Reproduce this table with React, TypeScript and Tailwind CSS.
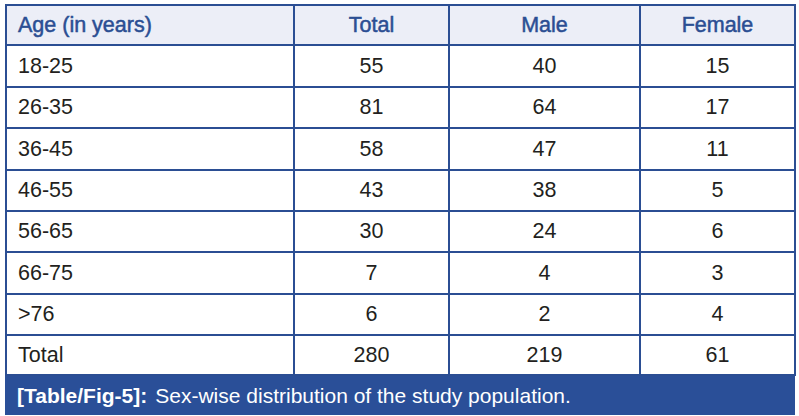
const rows: { age: string; total: string; male: string; female: string; h: string }[] = [
  { age: "18-25", total: "55", male: "40", female: "15", h: "h-[42px]" },
  { age: "26-35", total: "81", male: "64", female: "17", h: "h-[41px]" },
  { age: "36-45", total: "58", male: "47", female: "11", h: "h-[42px]" },
  { age: "46-55", total: "43", male: "38", female: "5", h: "h-[41px]" },
  { age: "56-65", total: "30", male: "24", female: "6", h: "h-[41px]" },
  { age: "66-75", total: "7", male: "4", female: "3", h: "h-[42px]" },
  { age: ">76", total: "6", male: "2", female: "4", h: "h-[41px]" },
  { age: "Total", total: "280", male: "219", female: "61", h: "h-[40px]" },
];

const th = "border-2 border-[#2b4e93] font-normal [-webkit-text-stroke:0.5px_#2b4e93]";
const td = "border-2 border-[#2b4e93]";

export default function App() {
  return (
    <div className="w-[799px] h-[416px] bg-white pl-[5px] pt-[4px] font-['Liberation_Sans',Arial,sans-serif]">
      <table className="w-[789px] table-fixed border-collapse border-2 border-[#2b4e93] text-[21.5px] text-[#231f20]">
        <colgroup>
          <col className="w-[288px]" />
          <col className="w-[155px]" />
          <col className="w-[191px]" />
          <col className="w-[155px]" />
        </colgroup>
        <thead>
          <tr className="h-[40px] bg-[#eceef7] text-[#2b4e93]">
            <th className={`${th} pl-[11px] text-left`}>Age (in years)</th>
            <th className={`${th} text-center`}>Total</th>
            <th className={`${th} text-center`}>Male</th>
            <th className={`${th} text-center`}>Female</th>
          </tr>
        </thead>
        <tbody>
          {rows.map((r) => (
            <tr key={r.age} className={r.h}>
              <td className={`${td} pl-[11px]`}>{r.age}</td>
              <td className={`${td} text-center`}>{r.total}</td>
              <td className={`${td} text-center`}>{r.male}</td>
              <td className={`${td} text-center`}>{r.female}</td>
            </tr>
          ))}
        </tbody>
      </table>
      <div className="w-[790px] h-[39px] bg-[#2a4f98] text-white text-[21px] flex items-center pl-[12px]">
        <span className="font-bold">[Table/Fig-5]:</span>
        <span className="ml-[8px]">Sex-wise distribution of the study population.</span>
      </div>
    </div>
  );
}
